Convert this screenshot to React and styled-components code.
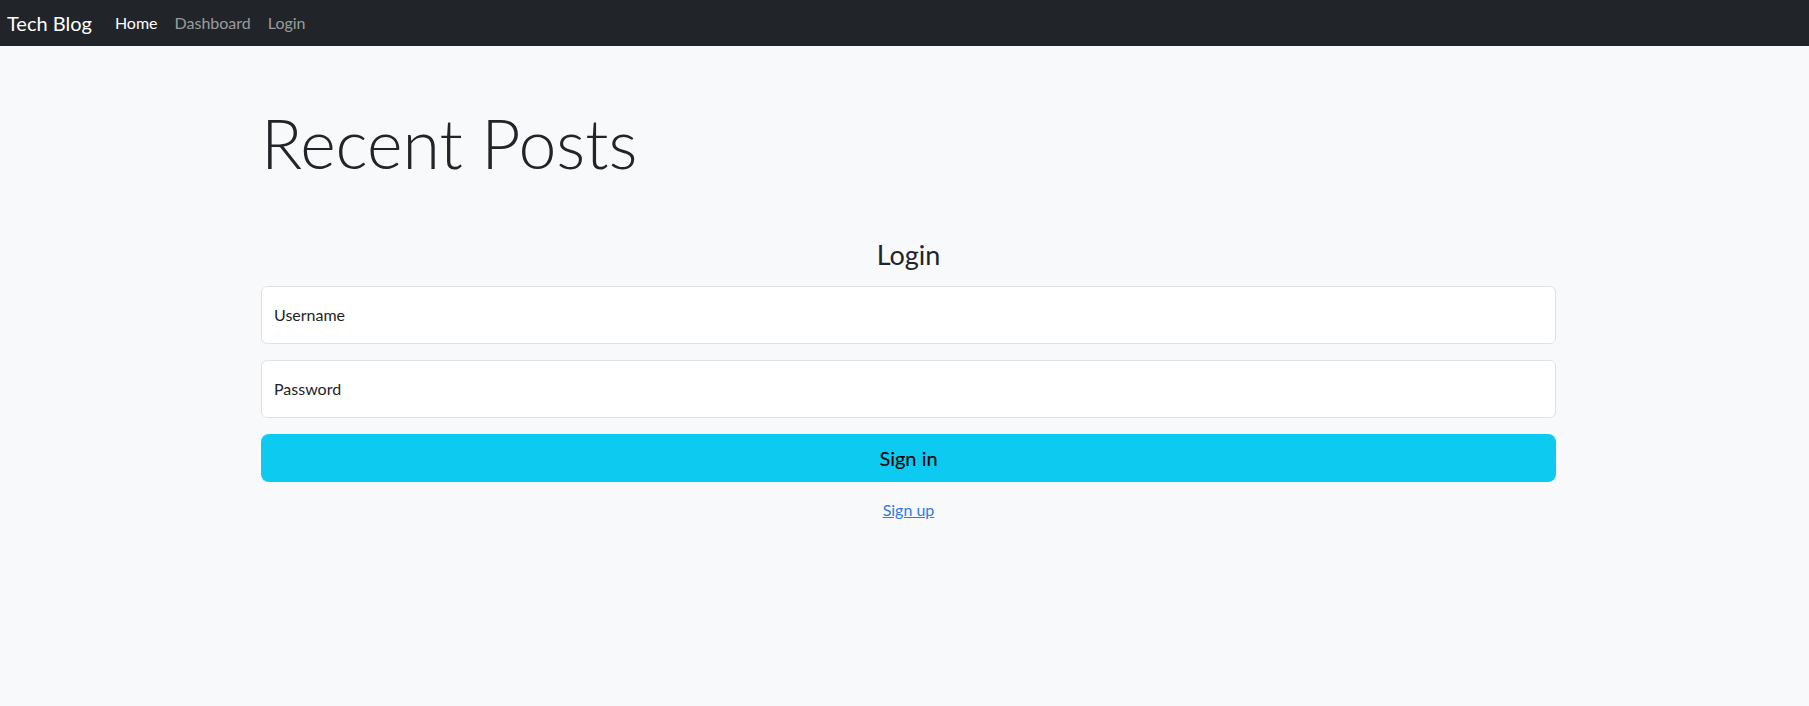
import styled, { createGlobalStyle } from 'styled-components'

const GlobalStyle = createGlobalStyle`
  html, body {
    margin: 0;
    padding: 0;
  }
  body {
    background: #f8f9fa;
    color: #212529;
    font-family: Lato, "Open Sans", "Liberation Sans", sans-serif;
    font-size: 16px;
    line-height: 1.5;
  }
`

function App() {
  return (
    <>
      <GlobalStyle />
      <Navbar>
        <Brand href="#">Tech Blog</Brand>
        <NavList>
          <NavLink href="#" active>
            Home
          </NavLink>
          <NavLink href="#">Dashboard</NavLink>
          <NavLink href="#">Login</NavLink>
        </NavList>
      </Navbar>
      <Main>
        <Container>
          <Header>Recent Posts</Header>
          <FormContainer onSubmit={(e) => e.preventDefault()}>
            <FormTitle>Login</FormTitle>
            <Field>
              <Input id="username" type="text" placeholder=" " />
              <Label htmlFor="username">Username</Label>
            </Field>
            <Field>
              <Input id="password" type="password" placeholder=" " />
              <Label htmlFor="password">Password</Label>
            </Field>
            <SubmitButton type="submit">Sign in</SubmitButton>
            <SignUp href="#">Sign up</SignUp>
          </FormContainer>
        </Container>
      </Main>
    </>
  )
}

const Navbar = styled.nav`
  display: flex;
  align-items: center;
  height: 46px;
  padding: 0 7px;
  background: #212529;
  box-sizing: border-box;
`

const Brand = styled.a`
  color: #fff;
  font-size: 20px;
  text-decoration: none;
  margin-right: 23px;
  line-height: 1;
`

const NavList = styled.div`
  display: flex;
  gap: 17px;
`

const NavLink = styled.a`
  color: ${(props) => (props.active ? '#fff' : 'rgba(255, 255, 255, 0.55)')};
  font-size: 16px;
  text-decoration: none;
`

const Main = styled.main`
  padding-left: 8px;
`

const Container = styled.div`
  width: 1295px;
  margin: 0 auto;
`

const Header = styled.h1`
  font-size: 68px;
  font-weight: 300;
  line-height: 1.2;
  margin: 56px 0 0;
  color: #212529;
`

const FormContainer = styled.form`
  display: flex;
  flex-direction: column;
  margin-top: 55px;
`

const FormTitle = styled.h3`
  margin: 0 0 15px;
  text-align: center;
  font-size: 27px;
  font-weight: 400;
  line-height: 1.2;
`

const Field = styled.div`
  position: relative;
  margin-bottom: 16px;
`

const Input = styled.input`
  display: block;
  width: 100%;
  height: 58px;
  box-sizing: border-box;
  padding: 16px 12px;
  border: 1px solid #dee2e6;
  border-radius: 6px;
  background: #fff;
  font-size: 16px;
  outline: 0;
`

const Label = styled.label`
  position: absolute;
  top: 0;
  left: 0;
  padding: 16px 12px;
  border: 1px solid transparent;
  line-height: 24px;
  color: #212529;
  pointer-events: none;
`

const SubmitButton = styled.button`
  height: 48px;
  border: 0;
  border-radius: 8px;
  background: #0dcaf0;
  color: #000;
  font-family: inherit;
  font-size: 20px;
  cursor: pointer;
`

const SignUp = styled.a`
  align-self: center;
  margin-top: 16px;
  color: #2f7ae5;
  text-decoration: underline;
  font-size: 16px;
`

export default App
